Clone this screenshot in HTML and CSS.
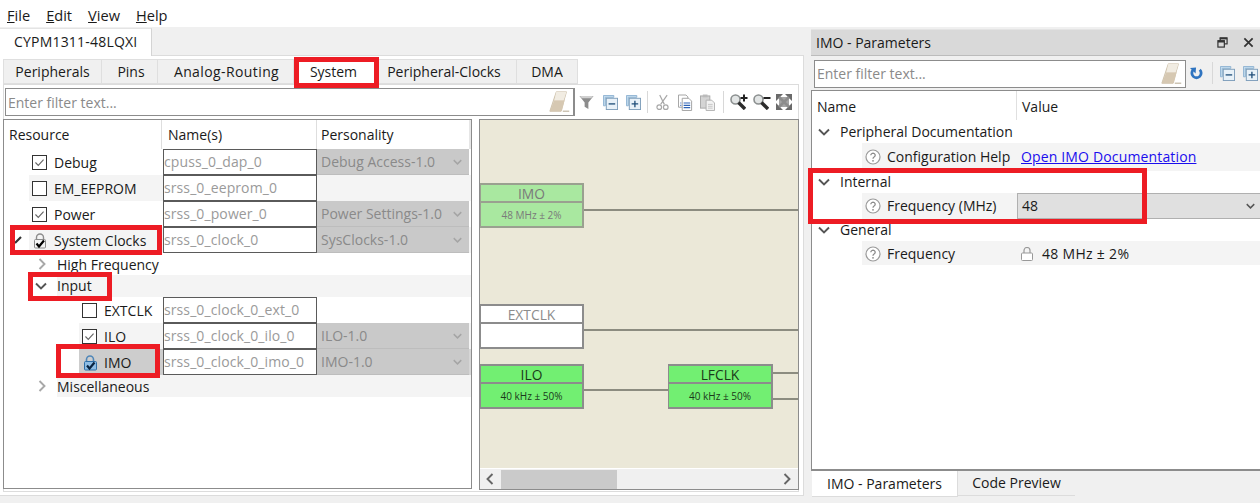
FILE: index.html
```html
<!DOCTYPE html>
<html lang="en">
<head>
<meta charset="utf-8">
<title>CYPM1311-48LQXI</title>
<link rel="stylesheet" href="styles.css">
</head>
<body>
<svg class="defs" width="0" height="0" aria-hidden="true">
  <defs>
    <symbol id="eraser" viewBox="0 0 26 26">
      <path d="M9 2h11l-6 21H2z" fill="#e6dccb" stroke="#cbbfa9"/>
      <path d="M7 11h11l-3 12H2z" fill="#d6c8b2"/>
      <path d="M9 2h11l-3 9H7z" fill="#f1ece2"/>
      <path d="M16 23h7" stroke="#c9bfae" stroke-width="1.5"/>
    </symbol>
    <symbol id="collapse" viewBox="0 0 16 16">
      <path d="M.5.5h11v2h-9v9h-2z" fill="#c5dcef" stroke="#8fb3d2"/>
      <rect x="3.5" y="3.5" width="12" height="12" fill="#e8f1f8" stroke="#7d9dba"/>
      <path d="M6 9.5h7" stroke="#1f4e79" stroke-width="1.4"/>
    </symbol>
    <symbol id="expand" viewBox="0 0 16 16">
      <path d="M.5.5h11v2h-9v9h-2z" fill="#c5dcef" stroke="#8fb3d2"/>
      <rect x="3.5" y="3.5" width="12" height="12" fill="#e8f1f8" stroke="#7d9dba"/>
      <path d="M6 9.5h7M9.5 6v7" stroke="#1f4e79" stroke-width="1.4"/>
    </symbol>
    <symbol id="lock" viewBox="0 0 16 16">
      <path d="M4.5 7V4.5a3.5 3.5 0 0 1 7 0V7" fill="none" stroke="#8c8c8c" stroke-width="1.4"/>
      <rect x="2.5" y="6.5" width="11" height="8.5" rx="1" fill="#f4f4f4" stroke="#8c8c8c"/>
      <path d="M4.500 10.500l2.500 3 5-6" fill="none" stroke="#000" stroke-width="2.200"/>
    </symbol>
    <symbol id="lockblue" viewBox="0 0 16 16">
      <path d="M4.5 7V4.5a3.5 3.500 0 0 1 7 0V7" fill="none" stroke="#4f86b8" stroke-width="1.600"/>
      <rect x="2.500" y="6.500" width="12" height="8.500" rx="1" fill="#8fbde4" stroke="#2f6ea6"/>
      <path d="M5 10.500l2.500 3 5-6" fill="none" stroke="#0a2440" stroke-width="2.200"/>
    </symbol>
    <symbol id="check" viewBox="0 0 16 16">
      <path d="M3 8l3.500 3.500 6.500-7" fill="none" stroke="#666" stroke-width="1.400"/>
    </symbol>
    <symbol id="down" viewBox="0 0 12 8">
      <path d="M1 1.500l5 5 5-5" fill="none" stroke="currentColor" stroke-width="1.900"/>
    </symbol>
    <symbol id="right" viewBox="0 0 8 12">
      <path d="M1.500 1l5 5-5 5" fill="none" stroke="currentColor" stroke-width="1.900"/>
    </symbol>
    <symbol id="help" viewBox="0 0 16 16">
      <circle cx="8" cy="8" r="7" fill="#fff" stroke="#9a9a9a" stroke-width="1.200"/>
      <path d="M5.800 6.200a2.200 2 0 1 1 3.300 1.800c-.8.5-1.100.9-1.100 1.800" fill="none" stroke="#8a8a8a" stroke-width="1.300"/>
      <circle cx="8" cy="11.800" r=".9" fill="#8a8a8a"/>
    </symbol>
    <symbol id="zoomglass" viewBox="0 0 16 16">
      <circle cx="5.500" cy="5.500" r="4.500" fill="#e2e5e5" stroke="#8b8f8f" stroke-width="1.600"/>
      <path d="M8.500 8.500l6.500 6.500" stroke="#2c2c2c" stroke-width="3.400"/>
    </symbol>
  </defs>
</svg>

<nav class="menu">
  <span class="menu-item"><u>F</u>ile</span>
  <span class="menu-item"><u>E</u>dit</span>
  <span class="menu-item"><u>V</u>iew</span>
  <span class="menu-item"><u>H</u>elp</span>
</nav>

<main class="workspace">
  <section class="editor">
    <div class="doc-tabs"><div class="doc-tab">CYPM1311-48LQXI</div></div>
    <div class="doc-body">
      <div class="tabs">
        <div class="tab tab-a">Peripherals</div>
        <div class="tab tab-b">Pins</div>
        <div class="tab tab-c">Analog-Routing</div>
        <div class="tab tab-d is-active">System</div>
        <div class="tab tab-e">Peripheral-Clocks</div>
        <div class="tab tab-f">DMA</div>
      </div>
      <div class="tab-panel">
        <div class="toolbar">
          <div class="filter filter-main">
            <span class="placeholder">Enter filter text...</span>
            <svg class="eraser"><use href="#eraser"/></svg>
          </div>
          <div class="tools">
            <svg class="tool-funnel" viewBox="0 0 16 16"><path d="M.5 1h15l-5.500 7v7l-4-2.500V8z" fill="#8c8c8c"/><path d="M1 1h14l-2 2.500H3z" fill="#d0d0d0"/></svg>
            <svg class="tool tool-collapse"><use href="#collapse"/></svg>
            <svg class="tool tool-expand"><use href="#expand"/></svg>
            <span class="tool-sep sep-a"></span>
            <svg class="tool-cut" viewBox="0 0 14 18"><path d="M12 1L5 11M4 1l5 10" fill="none" stroke="#a8a8a8" stroke-width="1.300"/><circle cx="3.500" cy="14" r="2.500" fill="none" stroke="#a8a8a8" stroke-width="1.300"/><circle cx="10.500" cy="14" r="2.500" fill="none" stroke="#a8a8a8" stroke-width="1.300"/></svg>
            <svg class="tool-copy" viewBox="0 0 16 18"><path d="M.5 1h8l2 2v11H.5z" fill="#fff" stroke="#a0a0a0"/><path d="M4.500 4.500h7l3 3v10h-10z" fill="#fff" stroke="#a0a0a0"/><path d="M2.500 9.500h1M6 9.500h7M2.500 12h1M6 12h7M6 14.500h7" stroke="#2f63b5" stroke-width="1.200"/></svg>
            <svg class="tool-paste" viewBox="0 0 16 18"><rect x=".5" y="2" width="10" height="13" fill="#d4d4d4" stroke="#a8a8a8"/><rect x="3" y=".5" width="5" height="3" fill="#bbb"/><path d="M6.500 6.500h6l3 3v8h-9z" fill="#f2f2f2" stroke="#b0b0b0"/><path d="M8.500 11h5M8.500 13h5M8.500 15h5" stroke="#c4c4c4"/></svg>
            <span class="tool-sep sep-b"></span>
            <span class="tool-zoom zoom-in">
              <svg class="zoom-glass"><use href="#zoomglass"/></svg>
              <svg class="zoom-sign" viewBox="0 0 8 8"><path d="M4 .5v7M.5 4h7" stroke="#222" stroke-width="2"/></svg>
            </span>
            <span class="tool-zoom zoom-out">
              <svg class="zoom-glass"><use href="#zoomglass"/></svg>
              <svg class="zoom-sign" viewBox="0 0 8 8"><path d="M.5 4h7" stroke="#222" stroke-width="2"/></svg>
            </span>
            <svg class="tool-fit" viewBox="0 0 16 16"><rect x="3" y="3" width="10" height="10" fill="#a4a4a4"/><path d="M0 0h7L0 7zM16 0H9l7 7zM0 16h7l-7-7zM16 16H9l7-7z" fill="#6a6a6a"/><path d="M3 3l10 10M13 3L3 13" stroke="#8c8c8c" stroke-width="2.500"/></svg>
          </div>
        </div>

        <div class="split">
          <div class="resources">
            <div class="res-head">
              <div class="res-col res-col-a">Resource</div>
              <div class="res-col res-col-b">Name(s)</div>
              <div class="res-col res-col-c">Personality</div>
            </div>

            <div class="res-row">
              <div class="res-main indent-1"><span class="box"><svg><use href="#check"/></svg></span>Debug</div>
              <div class="name-field">cpuss_0_dap_0</div>
              <div class="pers">Debug Access-1.0<svg class="pers-arrow"><use href="#down"/></svg></div>
            </div>
            <div class="res-row row-alt">
              <div class="res-main indent-1 alt-1"><span class="box"></span>EM_EEPROM</div>
              <div class="name-field">srss_0_eeprom_0</div>
              <div class="pers pers-none"></div>
            </div>
            <div class="res-row">
              <div class="res-main indent-1"><span class="box"><svg><use href="#check"/></svg></span>Power</div>
              <div class="name-field">srss_0_power_0</div>
              <div class="pers">Power Settings-1.0<svg class="pers-arrow"><use href="#down"/></svg></div>
            </div>
            <div class="res-row row-alt">
              <div class="res-main indent-1 alt-1 has-twist">
                <svg class="twist-small" viewBox="0 0 8 8"><path d="M1 7l6-6" stroke="#333" stroke-width="2.200"/></svg>
                <svg class="lock-icon"><use href="#lock"/></svg>System Clocks
              </div>
              <div class="name-field">srss_0_clock_0</div>
              <div class="pers">SysClocks-1.0<svg class="pers-arrow"><use href="#down"/></svg></div>
            </div>
            <div class="group-row">
              <svg class="group-arrow right-arrow"><use href="#right"/></svg><span class="group-label label-low">High Frequency</span>
            </div>
            <div class="group-row">
              <svg class="group-arrow down-arrow"><use href="#down"/></svg><span class="group-label group-alt">Input</span>
            </div>
            <div class="res-row">
              <div class="res-main indent-2"><span class="box"></span>EXTCLK</div>
              <div class="name-field">srss_0_clock_0_ext_0</div>
              <div class="pers pers-none"></div>
            </div>
            <div class="res-row row-alt">
              <div class="res-main indent-2 alt-2"><span class="box"><svg><use href="#check"/></svg></span>ILO</div>
              <div class="name-field">srss_0_clock_0_ilo_0</div>
              <div class="pers">ILO-1.0<svg class="pers-arrow"><use href="#down"/></svg></div>
            </div>
            <div class="res-row row-selected">
              <div class="res-main indent-2 selected"><svg class="lock-icon"><use href="#lockblue"/></svg>IMO</div>
              <div class="name-field">srss_0_clock_0_imo_0</div>
              <div class="pers">IMO-1.0<svg class="pers-arrow"><use href="#down"/></svg></div>
            </div>
            <div class="group-row">
              <svg class="group-arrow right-arrow"><use href="#right"/></svg><span class="group-label group-alt label-low">Miscellaneous</span>
            </div>
          </div>

          <div class="diagram">
            <div class="canvas">
              <span class="wire wire-imo"></span>
              <span class="wire wire-ext"></span>
              <span class="wire wire-ilo"></span>
              <span class="wire wire-lf-a"></span>
              <span class="wire wire-lf-b"></span>
              <div class="node node-imo"><div class="node-title">IMO</div><div class="node-value">48 MHz ± 2%</div></div>
              <div class="node node-ext"><div class="node-title">EXTCLK</div><div class="node-value"></div></div>
              <div class="node node-ilo"><div class="node-title">ILO</div><div class="node-value">40 kHz ± 50%</div></div>
              <div class="node node-lf"><div class="node-title">LFCLK</div><div class="node-value">40 kHz ± 50%</div></div>
            </div>
            <div class="hscroll">
              <svg class="hs-arrow"><use href="#right"/></svg>
              <span class="hs-track"><span class="hs-thumb"></span></span>
              <svg class="hs-arrow-r"><use href="#right"/></svg>
            </div>
          </div>
        </div>
      </div>
    </div>
  </section>

  <aside class="params">
    <header class="params-title">
      <span>IMO - Parameters</span>
      <span class="title-icons">
        <svg class="win-icon" viewBox="0 0 12 12"><rect x="3.500" y="1" width="7.500" height="6.500" fill="none" stroke="#333" stroke-width="1.300"/><path d="M3 1.600h8" stroke="#333" stroke-width="2"/><rect x="1" y="4" width="7" height="7" fill="#d9d9d9" stroke="#333" stroke-width="1.300"/><path d="M1 5h7" stroke="#333" stroke-width="2"/></svg>
        <svg class="win-icon" viewBox="0 0 12 12"><path d="M1.500 1.500l9 9M10.500 1.500l-9 9" stroke="#333" stroke-width="1.900"/></svg>
      </span>
    </header>
    <div class="params-bar">
      <div class="filter filter-side">
        <span class="placeholder">Enter filter text...</span>
        <svg class="eraser"><use href="#eraser"/></svg>
      </div>
      <svg class="refresh" viewBox="0 0 14 14"><path d="M3.500 3a5 5 0 1 0 7 0" fill="none" stroke="#2f74c0" stroke-width="3"/><path d="M0 1l6.500-.5L6 7z" fill="#2f74c0"/></svg>
      <span class="tool-sep sep-c"></span>
      <svg class="tool tool-c"><use href="#collapse"/></svg>
      <svg class="tool tool-e"><use href="#expand"/></svg>
    </div>
    <div class="params-tree">
      <div class="pt-head">
        <div class="pt-name">Name</div>
        <div class="pt-value">Value</div>
      </div>
      <div class="pt-group pt-group-first"><svg class="group-arrow down-arrow"><use href="#down"/></svg>Peripheral Documentation</div>
      <div class="pt-item pt-doc">
        <div class="pt-label"><svg class="help"><use href="#help"/></svg>Configuration Help</div>
        <a class="doc-link" href="#">Open IMO Documentation</a>
      </div>
      <div class="pt-group"><svg class="group-arrow down-arrow"><use href="#down"/></svg>Internal</div>
      <div class="pt-item pt-item-select">
        <div class="pt-label"><svg class="help"><use href="#help"/></svg>Frequency (MHz)</div>
        <div class="freq">48<svg class="freq-arrow"><use href="#down"/></svg></div>
      </div>
      <div class="pt-group"><svg class="group-arrow down-arrow"><use href="#down"/></svg>General</div>
      <div class="pt-item pt-last">
        <div class="pt-label"><svg class="help"><use href="#help"/></svg>Frequency</div>
        <div class="pt-locked">
          <svg class="pad-lock" viewBox="0 0 12 14"><path d="M3 6V3.500a3 3 0 0 1 6 0V6" fill="none" stroke="#999" stroke-width="1.200"/><rect x=".5" y="6" width="11" height="7.500" rx="1" fill="#fff" stroke="#999"/></svg>48 MHz ± 2%
        </div>
      </div>
    </div>
    <div class="bottom-tabs">
      <div class="bottom-tab is-active">IMO - Parameters</div>
      <div class="bottom-tab">Code Preview</div>
    </div>
  </aside>
</main>

<span class="mark mark-system"></span>
<span class="mark mark-clocks"></span>
<span class="mark mark-input"></span>
<span class="mark mark-imo"></span>
<span class="mark mark-internal"></span>
</body>
</html>
```
FILE: styles.css
```css
* { box-sizing: border-box; }
html, body { margin: 0; height: 100%; }
body {
  position: relative;
  width: 1260px;
  height: 503px;
  overflow: hidden;
  background: #f0f0f0;
  color: #1a1a1a;
  font: 14px/20px "Open Sans", "Noto Sans", sans-serif;
}
svg { display: block; flex: none; }
.defs { position: absolute; }

/* Menu */
.menu { display: flex; height: 27px; padding: 5px 0 0 7px; gap: 16px; background: #fff; font-size: 14.600px; }

/* Main split */
.workspace { display: flex; height: 476px; }
.editor { flex: none; width: 804px; display: flex; flex-direction: column; }
.doc-tabs { display: flex; height: 29px; padding-top: 1px; border-bottom: 1px solid #dcdcdc; }
.doc-tab { width: 152px; margin-bottom: -1px; padding: 3px 0 0 14px; background: #fff; border-right: 1px solid #d4d4d4; border-top: 1px solid #e4e4e4; letter-spacing: .2px; }
.doc-body { width: 804px; height: 440px; padding: 3px 4px 3px 3px; background: #fff; border-right: 1px solid #dcdcdc; border-bottom: 1px solid #dcdcdc; }

/* Editor tabs */
.tabs { display: flex; height: 25px; }
.tab { display: flex; align-items: center; justify-content: center; padding-top: 1px; background: #f0f0f0; border: 1px solid #dfdfdf; border-left-width: 0; }
.tab-a { width: 99px; border-left-width: 1px; }
.tab-b { width: 56px; padding-left: 3px; }
.tab-c { width: 136px; padding-left: 2px; letter-spacing: .4px; }
.tab-d { width: 84px; padding-right: 4px; }
.tab-e { width: 139px; padding-right: 6px; }
.tab-f { width: 61px; }
.is-active { background: #fff; }
.tab-panel { height: 408px; border: 1px solid #dcdcdc; padding: 3px 1px 0 1px; }

/* Toolbar */
.toolbar { display: flex; height: 28px; }
.filter { display: flex; flex: none; align-items: center; justify-content: space-between; padding-left: 2px; background: #fff; border: 1px solid #8c8c8c; }
.filter-main { width: 570px; height: 28px; border-width: 1px 2px 1px 1px; }
.placeholder { color: #8a8a8a; padding-top: 1px; }
.eraser { width: 24px; height: 24px; margin-right: 1px; }
.tools { display: flex; align-items: center; padding-left: 4px; }
.tool-funnel { width: 15px; height: 15px; }
.tool { width: 15px; height: 15px; }
.tool-collapse { margin-left: 9px; }
.tool-expand { margin-left: 8px; }
.tool-sep { width: 1px; height: 22px; background: #d8d8d8; flex: none; }
.sep-a { margin-left: 6px; }
.sep-b { margin-left: 8px; }
.tool-cut { width: 13px; height: 17px; margin-left: 8px; }
.tool-copy { width: 15px; height: 17px; margin-left: 9px; }
.tool-paste { width: 15px; height: 17px; margin-left: 7px; }
.tool-zoom { position: relative; width: 16px; height: 16px; }
.zoom-in { margin-left: 6px; }
.zoom-out { margin-left: 7px; }
.zoom-glass { width: 16px; height: 16px; }
.zoom-sign { position: absolute; top: 0; right: -2px; width: 8px; height: 8px; }
.tool-fit { width: 16px; height: 16px; margin-left: 7px; }

/* Resources */
.split { display: flex; margin-top: 3px; gap: 7px; }
.resources { flex: none; width: 469px; height: 370px; margin-left: -2px; background: #fff; border: 1px solid #8c8c8c; }
.res-head { display: grid; grid-template-columns: 158px 155px 1fr; height: 29px; }
.res-col { padding: 5px 0 0 5px; }
.res-col-b { padding-left: 6px; }
.res-col-c { padding-left: 4px; }
.res-col-a, .res-col-b { border-right: 1px solid #dedede; }
.res-col-c { border-right: 2px solid #e6e6e6; }
.res-row { display: grid; grid-template-columns: 159px 154px 152px 1fr; height: 26px; }
.row-alt { background: #f4f4f4; }
.row-selected { background: #d6d6d6; }
.res-main { display: flex; align-items: center; height: 26px; padding-top: 1px; }
.indent-1 { padding-left: 28px; }
.indent-2 { padding-left: 78px; }
.alt-1 { background: linear-gradient(90deg, #fff 25px, #f4f4f4 25px); }
.alt-2 { background: linear-gradient(90deg, #fff 75px, #f4f4f4 75px); }
.selected { background: linear-gradient(90deg, #fff 75px, #cdcdcd 75px); }
.box { flex: none; width: 15px; height: 15px; margin-right: 7px; background: #fff; border: 1px solid #333; }
.box svg { width: 13px; height: 13px; }
.lock-icon { width: 16px; height: 16px; margin-right: 6px; }
.has-twist { position: relative; }
.twist-small { position: absolute; left: 10px; top: 9px; width: 8px; height: 8px; }
.name-field { height: 26px; padding: 2px 0 0 0; color: #9a9a9a; background: #fff; border: 1px solid #5a5a5a; white-space: nowrap; letter-spacing: .1px; }
.pers { position: relative; height: 26px; padding: 3px 0 0 4px; color: #8a8a8a; background: #c9c9c9; border-bottom: 1px solid #bdbdbd; white-space: nowrap; }
.pers-none { background: transparent; border: 0; }
.pers-arrow { position: absolute; right: 7px; top: 10px; width: 9px; height: 6px; color: #a5a5a5; }
.group-row { display: flex; align-items: center; height: 22px; padding-left: 34px; }
.group-arrow { flex: none; color: #555; }
.right-arrow { width: 8px; height: 12px; color: #a8a8a8; margin-right: 11px; }
.down-arrow { width: 12px; height: 8px; margin: 0 10px 0 -3px; }
.group-label { flex: 1; display: block; height: 22px; line-height: 22px; }
.label-low { padding-top: 1px; }
.group-alt { background: #f4f4f4; }

/* Diagram */
.diagram { flex: none; width: 320px; height: 371px; display: flex; flex-direction: column; border: 1px solid #8c8c8c; }
.canvas { position: relative; flex: 1; overflow: hidden; background: #ebe8d8; }
.wire { position: absolute; height: 2px; background: #8c8c80; }
.wire-imo { left: 104px; width: 220px; top: 89px; }
.wire-ext { left: 104px; width: 220px; top: 209px; }
.wire-ilo { left: 104px; width: 86px; top: 269px; }
.wire-lf-a { left: 293px; width: 30px; top: 252px; }
.wire-lf-b { left: 293px; width: 30px; top: 278px; }
.node { position: absolute; left: 0; width: 104px; height: 45px; display: flex; flex-direction: column; border: 2px solid #8c8c8c; border-left-width: 1px; text-align: center; }
.node-title { height: 18px; flex: none; font-size: 13.800px; line-height: 17px; border-bottom: 2px solid #8c8c8c; }
.node-value { flex: 1; font-size: 10px; line-height: 25px; }
.node-imo { top: 63px; background: #a9e8a0; color: #7a7a7a; border-color: #9aa090; }
.node-imo .node-title { border-color: #9aa090; }
.node-ext { top: 184px; background: #fff; color: #8c8c8c; }
.node-ilo { top: 244px; background: #72ef72; color: #1a3a1a; }
.node-lf { top: 244px; left: 188px; width: 105px; background: #72ef72; color: #1a3a1a; }
.hscroll { display: flex; align-items: center; height: 21px; background: #f0f0f0; border-top: 1px solid #fff; }
.hs-arrow { width: 8px; height: 12px; margin-left: 6px; color: #666; transform: scaleX(-1); }
.hs-track { flex: 1; height: 19px; padding-left: 7px; }
.hs-thumb { display: block; width: 116px; height: 19px; background: #cacaca; }
.hs-arrow-r { width: 8px; height: 12px; margin-right: 7px; color: #666; }

/* Parameters */
.params { flex: none; width: 449px; margin-left: 7px; padding-top: 2px; display: flex; flex-direction: column; }
.params-title { display: flex; flex: none; justify-content: space-between; align-items: center; height: 27px; padding: 0 6px 0 5px; background: #d9d9d9; border-top: 1px solid #e4e4e4; border-bottom: 1px solid #bcbcbc; }
.title-icons { display: flex; gap: 15px; }
.win-icon { width: 11px; height: 11px; }
.params-bar { display: flex; flex: none; align-items: center; height: 34px; padding: 0 0 0 3px; background: #f0f0f0; }
.filter-side { width: 372px; height: 28px; margin-top: 1px; }
.refresh { width: 13px; height: 13px; margin-left: 4px; }
.sep-c { margin-left: 9px; }
.tool-c { margin-left: 7px; }
.tool-e { margin-left: 8px; }
.params-tree { flex: none; height: 381px; background: #fff; border-left: 1px solid #8c8c8c; border-top: 1px solid #8c8c8c; border-bottom: 2px solid #8c8c8c; }
.pt-head { display: grid; grid-template-columns: 205px 1fr; height: 29px; }
.pt-name { padding: 6px 0 0 5px; border-right: 1px solid #e0e0e0; }
.pt-value { padding: 6px 0 0 5px; }
.pt-group { display: flex; align-items: center; height: 22px; padding-left: 9px; }
.pt-group-first { height: 23px; }
.pt-item { display: grid; grid-template-columns: 155px 1fr; height: 26px; margin-left: 50px; align-items: center; background: #f4f4f4; }
.pt-doc { height: 28px; }
.pt-label { display: flex; align-items: center; padding-left: 3px; }
.help { width: 16px; height: 16px; margin-right: 6px; }
.doc-link { color: #1a0dee; padding-left: 4px; letter-spacing: .15px; }
.pt-item-select { background: #fff; }
.pt-item-select .pt-label { height: 26px; background: #f4f4f4; }
.freq { position: relative; height: 26px; padding: 2px 0 0 4px; background: #e0e0e0; border: 1px solid #b0b0b0; border-width: 1px 0 1px 1px; }
.freq-arrow { position: absolute; right: 5px; top: 9px; width: 9px; height: 6px; color: #555; }
.pt-last { height: 24px; padding-top: 1px; }
.pt-locked { display: flex; align-items: center; padding-left: 4px; letter-spacing: .3px; }
.pad-lock { width: 12px; height: 14px; margin-right: 9px; }
.bottom-tabs { display: flex; height: 27px; }
.bottom-tab { display: flex; align-items: center; justify-content: center; height: 26px; border-bottom: 1px solid #dcdcdc; }
.bottom-tab:first-child { width: 146px; margin-left: 1px; background: #fff; border-right: 1px solid #dcdcdc; }
.bottom-tab:last-child { width: 117px; height: 25px; }

/* Red annotation boxes drawn over the screenshot */
.mark { position: absolute; border: 5px solid #ed1c24; pointer-events: none; }
.mark-system { left: 294px; top: 57px; width: 85px; height: 31px; }
.mark-clocks { left: 10px; top: 225px; width: 152px; height: 30px; }
.mark-input { left: 28px; top: 272px; width: 84px; height: 29px; }
.mark-imo { left: 56px; top: 344px; width: 104px; height: 34px; }
.mark-internal { left: 808px; top: 168px; width: 339px; height: 56px; }
```
